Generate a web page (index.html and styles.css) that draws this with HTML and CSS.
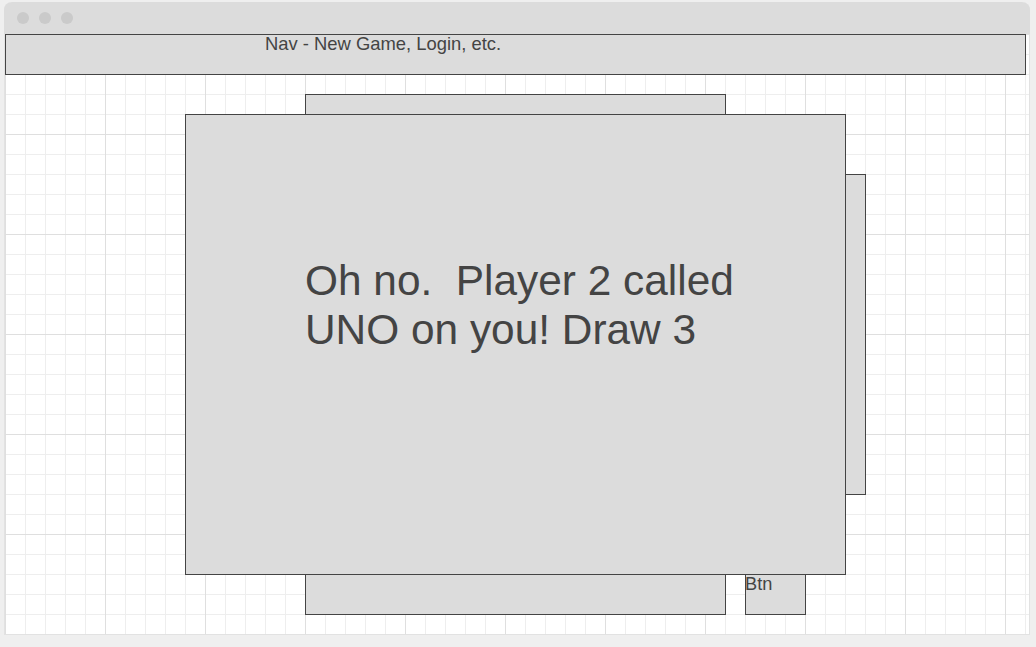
FILE: index.html
```html
<!DOCTYPE html>
<html lang="en">
<head>
<meta charset="utf-8">
<title>UNO wireframe</title>
<link rel="stylesheet" href="styles.css">
</head>
<body>
  <div class="window">
    <div class="titlebar">
      <span class="dot"></span>
      <span class="dot"></span>
      <span class="dot"></span>
    </div>
    <div class="canvas">
      <div class="nav">Nav - New Game, Login, etc.</div>
      <div class="box card-top"></div>
      <div class="box card-bottom"></div>
      <div class="box card-right"></div>
      <div class="box btn">Btn</div>
      <div class="box dialog">
        <p class="message">Oh no.&nbsp; Player 2 called<br>UNO on you! Draw 3</p>
      </div>
    </div>
  </div>
</body>
</html>
```

FILE: styles.css
```css
html, body {
  margin: 0;
  padding: 0;
}

body {
  background: #efefef;
  padding: 2px 0 0 4px;
  font-family: "Liberation Sans", Arial, sans-serif;
  color: #444;
}

.window {
  width: 1026px;
  box-sizing: border-box;
  border-left: 1px solid #e2e2e2;
  border-right: 1px solid #e2e2e2;
  border-bottom: 1px solid #e2e2e2;
  border-radius: 8px 8px 0 0;
  background: #fff;
}

.titlebar {
  height: 32px;
  margin: 0 -1px;
  background: #dcdcdc;
  border-radius: 8px 8px 0 0;
  display: flex;
  align-items: center;
  gap: 10px;
  padding-left: 13px;
  box-sizing: border-box;
}

.dot {
  width: 12px;
  height: 12px;
  border-radius: 50%;
  background: #cacaca;
}

.canvas {
  position: relative;
  height: 600px;
  overflow: hidden;
  background-color: #fff;
  background-image:
    linear-gradient(to right, #dfdfdf 1px, transparent 1px),
    linear-gradient(to bottom, #dfdfdf 1px, transparent 1px),
    linear-gradient(to right, #eeeeee 1px, transparent 1px),
    linear-gradient(to bottom, #eeeeee 1px, transparent 1px);
  background-size: 100px 100px, 100px 100px, 20px 20px, 20px 20px;
}

.nav {
  width: 1021px;
  height: 41px;
  box-sizing: border-box;
  background: #dcdcdc;
  border: 1px solid #444;
  padding-left: 259px;
  font-size: 18.4px;
  line-height: 18px;
}

.box {
  position: absolute;
  box-sizing: border-box;
  background: #dcdcdc;
  border: 1px solid #444;
}

.card-top {
  left: 300px;
  top: 60px;
  width: 421px;
  height: 100px;
}

.card-bottom {
  left: 300px;
  top: 500px;
  width: 421px;
  height: 81px;
}

.card-right {
  left: 800px;
  top: 140px;
  width: 61px;
  height: 321px;
}

.btn {
  left: 740px;
  top: 540px;
  width: 61px;
  height: 41px;
  font-size: 18.2px;
  line-height: 18px;
  text-indent: -1px;
}

.dialog {
  left: 180px;
  top: 80px;
  width: 661px;
  height: 461px;
  padding: 141px 0 0 119px;
}

.message {
  margin: 0;
  font-size: 42.4px;
  line-height: 49px;
}
```
